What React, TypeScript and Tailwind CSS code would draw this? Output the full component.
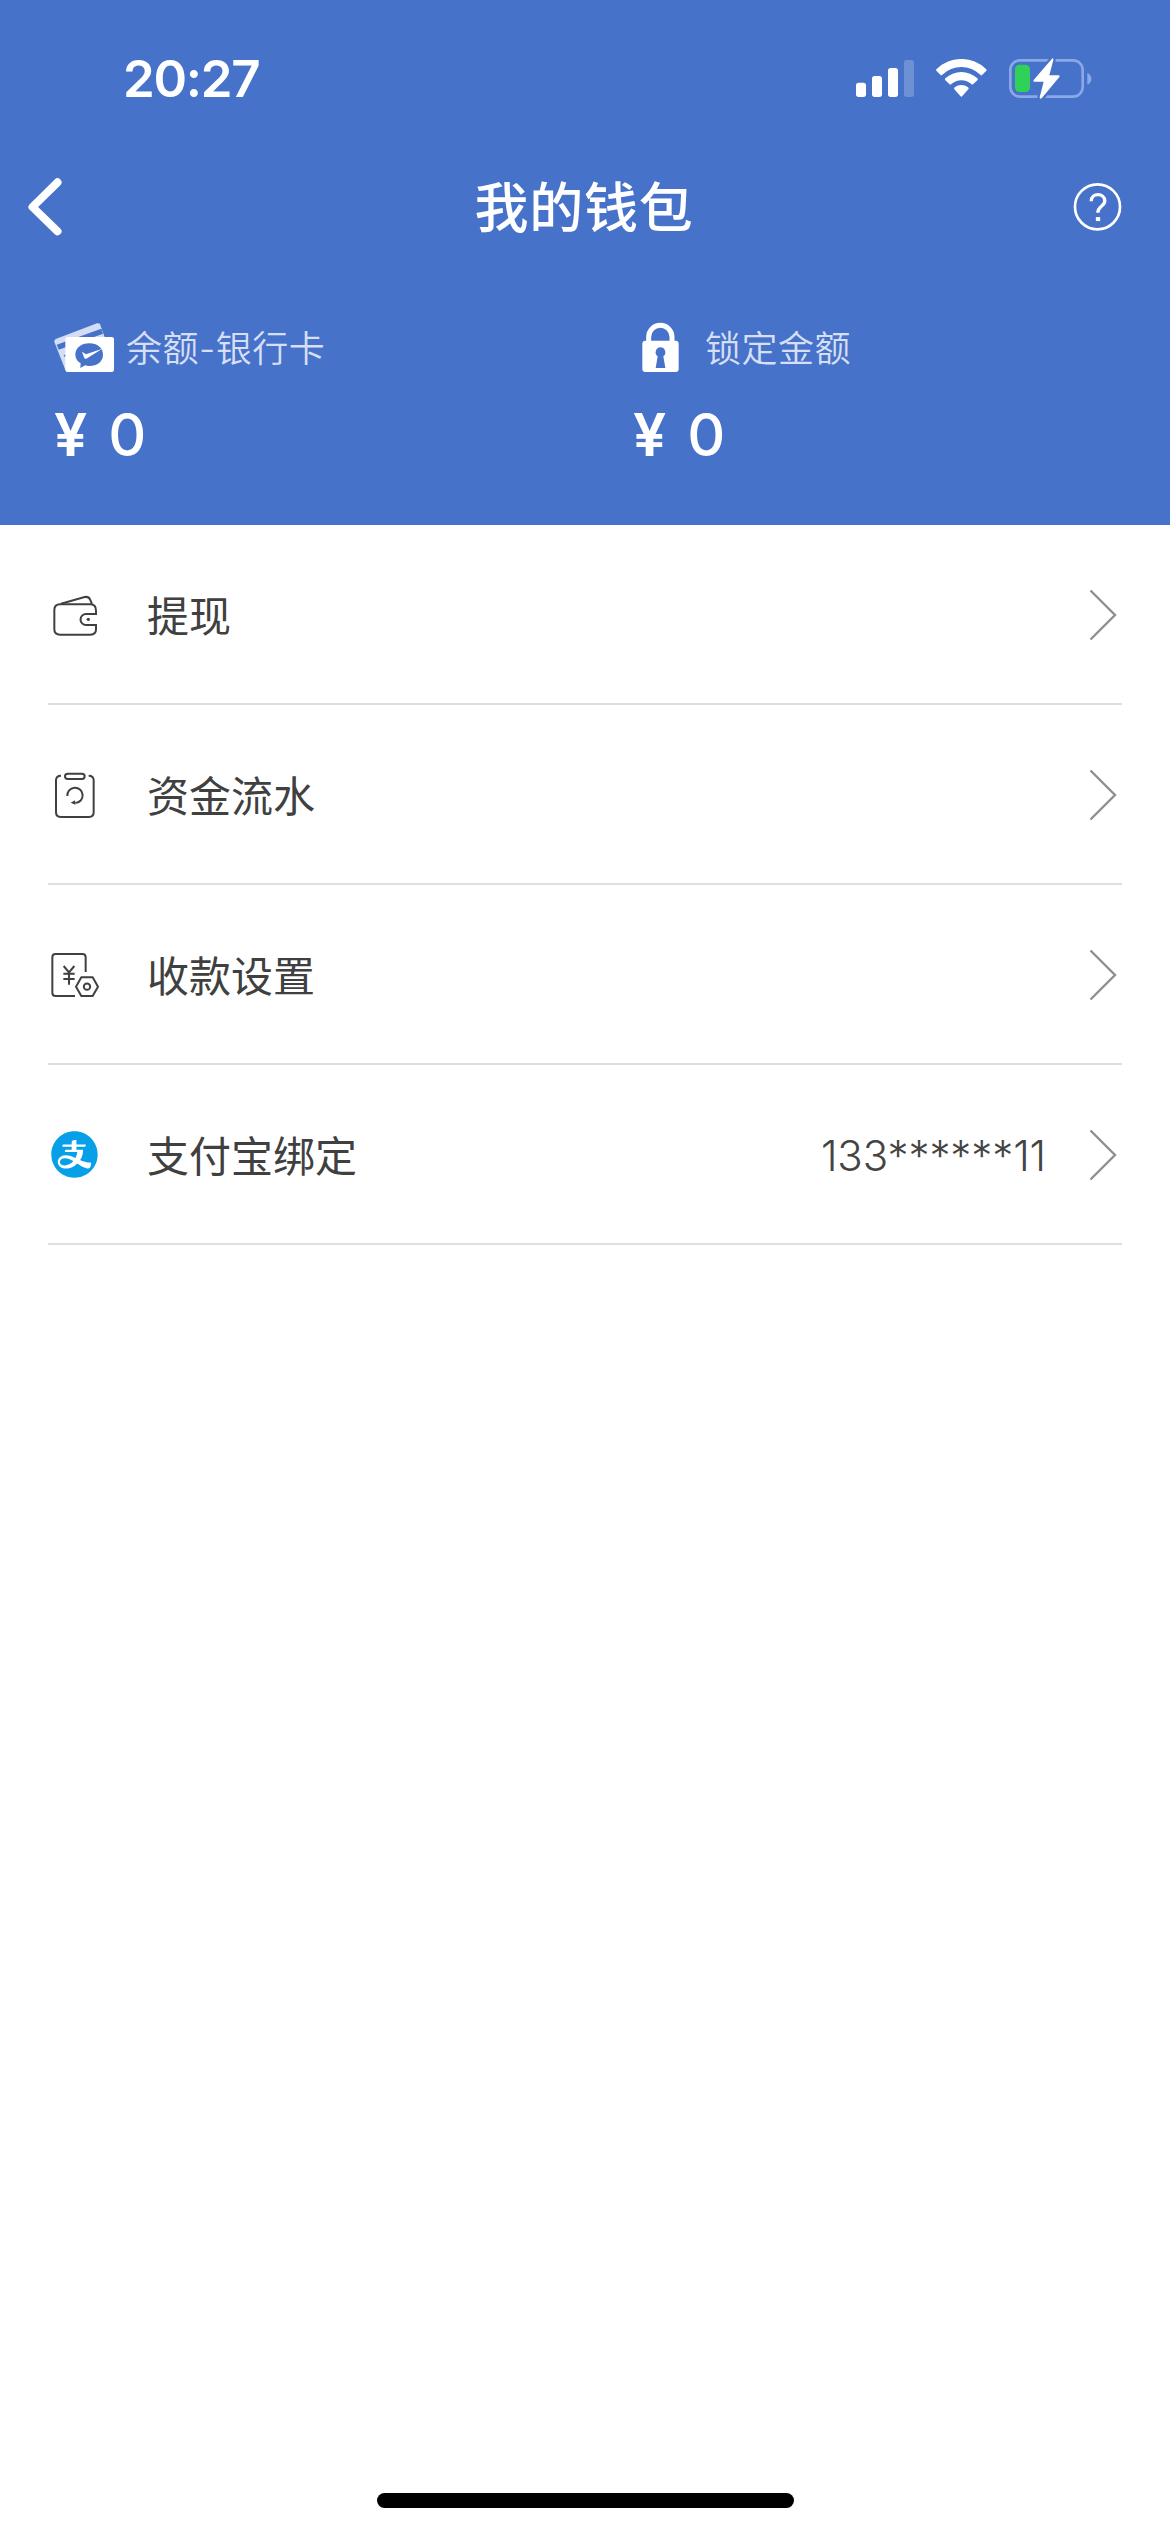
import type { ReactNode } from "react";
import { AiFillAlipayCircle } from "react-icons/ai";

const SignalIcon = () => (
    <svg viewBox="105 84 180 117" className="w-[60px] h-[39px]" fill="#fff">
        <rect x="108" y="155" width="30" height="43" rx="8" />
        <rect x="156" y="135" width="30" height="63" rx="8" />
        <rect x="204" y="111" width="30" height="87" rx="8" />
        <rect x="252" y="87" width="30" height="111" rx="8" opacity="0.22" />
    </svg>
);

const WifiIcon = () => (
    <svg viewBox="345 84 156 117" className="w-[52px] h-[39px] ml-[20px]" fill="#fff">
        <path d="M349 119 Q347 117 350 114 A106 106 0 0 1 498 114 Q501 117 499 119 L487 131 Q484 134 481 131 A82 82 0 0 0 367 131 Q364 134 361 131 Z" />
        <path d="M376 148 Q373 145 376 142 A70 70 0 0 1 472 142 Q475 145 472 148 L460 159 Q457 162 454 159 A45 45 0 0 0 394 159 Q391 162 388 159 Z" />
        <path d="M403 175 Q401 172 404 169 A32 32 0 0 1 444 169 Q448 172 445 175 L427 195 Q424 199 421 195 Z" />
    </svg>
);

const BatteryIcon = () => (
    <svg viewBox="564 78 252 129" className="w-[84px] h-[43px] ml-[21px]">
        <rect x="571" y="88" width="217" height="109" rx="29" fill="none" stroke="#8ba8e6" strokeWidth="8" />
        <path d="M802 125 Q814 131 814 143 Q814 155 802 161 Z" fill="#8ba8e6" />
        <rect x="585" y="101" width="45" height="82" rx="14" fill="#2fd159" />
        <path d="M696 83 L641 147 Q638 152 643 152 H671 L659 199 Q659 206 665 202 L718 138 Q721 133 715 133 H688 L700 87 Q701 79 696 83 Z" fill="#fff" stroke="#4672c9" strokeWidth="14" paintOrder="stroke" />
    </svg>
);

const BackIcon = () => (
    <svg viewBox="80 440 110 180" className="w-[37px] h-[60px]" fill="none" stroke="#fff" strokeWidth="24" strokeLinecap="round" strokeLinejoin="round">
        <path d="M171 456 L96 530 L171 603" />
    </svg>
);

const HelpIcon = () => (
    <svg viewBox="760 456 148 148" className="w-[49px] h-[49px]" fill="none" stroke="#fff">
        <circle cx="834" cy="528" r="68" strokeWidth="8" />
        <path d="M815 511 C815 484 856 485 856 510 C856 526 835 525 835 546" strokeWidth="10" />
        <rect x="829" y="559" width="13" height="12" fill="#fff" stroke="none" />
    </svg>
);

const CardsIcon = () => (
    <svg viewBox="72 66 183 153" className="w-[61px] h-[51px]">
        <path d="M77 117 L201 70 Q207 68 210 73 L240 155 L115 211 Q108 214 105 207 L73 126 Q72 120 77 117 Z" fill="#d3ddf6" />
        <path d="M80 134 L214 86 L219 101 L86 149 Z" fill="#4672c9" />
        <path d="M102 168 L112 164" stroke="#4672c9" strokeWidth="5" />
        <rect x="106" y="111" width="146" height="105" rx="7" fill="#fff" />
        <path d="M178 130 C202 130 219 144 219 164 C219 184 202 198 178 198 Q170 198 165 196 L151 204 L152 190 C142 184 136 175 136 164 C136 144 154 130 178 130 Z" fill="#4672c9" />
        <path d="M156 155 L168 163 L217 146 L169 176 Q164 178 162 172 Z" fill="#fff" />
    </svg>
);

const LockIcon = () => (
    <svg viewBox="72 66 183 153" className="w-[61px] h-[51px]">
        <path d="M119 126 V111 A35 35 0 0 1 189 111 V126" fill="none" stroke="#fff" strokeWidth="15" />
        <rect x="100" y="122" width="109" height="94" rx="9" fill="#fff" />
        <path d="M154 142 A15 15 0 0 1 163 169 L169 204 H140 L146 169 A15 15 0 0 1 154 142 Z" fill="#4672c9" />
    </svg>
);

const WalletIcon = () => (
    <svg viewBox="60 60 150 150" className="w-[50px] h-[50px]" fill="none" stroke="#404040" strokeWidth="6">
        <path d="M198 132 V122 Q198 103 180 103 H90 Q73 103 73 120 V178 Q73 194 90 194 H181 Q198 194 198 178 V165 H168 A16.500 16.500 0 0 1 168 132 Z" />
        <path d="M93 101 L164 81 Q176 79 180 88 L186 102" />
        <circle cx="175" cy="148" r="5" fill="#404040" stroke="none" />
    </svg>
);

const FlowIcon = () => (
    <svg viewBox="60 60 150 150" className="w-[50px] h-[50px]" fill="none" stroke="#404040" strokeWidth="6">
        <path d="M93 77 Q78 77 78 91 V187 Q78 201 92 201 H177 Q191 201 191 187 V91 Q191 77 176 77" />
        <rect x="105" y="71" width="59" height="16" rx="8" />
        <path d="M112 138 A23 23 0 1 1 136 159" />
        <path d="M122 158 L135 151 L136 164 Z" fill="#404040" stroke="none" />
    </svg>
);

const SettingIcon = () => (
    <svg viewBox="60 60 150 150" className="w-[50px] h-[50px]" fill="none" stroke="#404040" strokeWidth="6">
        <path d="M167 126 V82 Q167 72 157 72 H77 Q67 72 67 82 V188 Q67 198 77 198 H135" />
        <path d="M101 108 L117 127 L133 108 M117 127 V164 M100 131 H134 M100 147 H134" />
        <path d="M154 142 H188 L204 170 L188 198 H154 L138 170 Z" strokeLinejoin="round" />
        <circle cx="171" cy="170" r="9.500" strokeWidth="6" />
    </svg>
);

const ArrowIcon = () => (
    <svg viewBox="0 0 28 52" className="w-[28px] h-[52px]" fill="none" stroke="#8f8f8f" strokeWidth="2.4">
        <path d="M1.500 1.500 L26 26 L1.500 50.500" />
    </svg>
);

const balances: { label: string; amount: number; icon: ReactNode }[] = [
    { label: "余额-银行卡", amount: 0, icon: <CardsIcon /> },
    { label: "锁定金额", amount: 0, icon: <LockIcon /> },
];

const menus: { title: string; icon: ReactNode; value?: string }[] = [
    { title: "提现", icon: <WalletIcon /> },
    { title: "资金流水", icon: <FlowIcon /> },
    { title: "收款设置", icon: <SettingIcon /> },
    { title: "支付宝绑定", icon: <AiFillAlipayCircle className="size-[53px] shrink-0 -mt-[2px] -ml-[2px] -mr-[1px] text-[#069fe8]" />, value: "133******11" },
];

export default function App() {
    return (
        <div className="w-[1170px] h-[2532px] flex flex-col bg-white font-['Inter','Noto_Sans_CJK_SC',sans-serif]">
            <header className="h-[525px] bg-[#4672c9] text-white">
                <div className="h-[156px] pl-[123px] pr-[78px] flex items-center">
                    <span className="flex-1 text-[51px] leading-none font-semibold tracking-[-1.3px]">20:27</span>
                    <SignalIcon />
                    <WifiIcon />
                    <BatteryIcon />
                </div>
                <div className="h-[102px] pl-[27px] pr-12 flex items-center justify-between">
                    <div className="w-[56px]"><BackIcon /></div>
                    <h1 className="pt-[3px] pl-[12px] text-[54px] leading-none font-medium tracking-[0.8px]">我的钱包</h1>
                    <div className="w-[49px]"><HelpIcon /></div>
                </div>
                <div className="pt-[63px] pl-[54px] flex">
                    {balances.map((item) => (
                        <div key={item.label} className="w-[579px] shrink-0">
                            <div className="h-[52px] flex items-center gap-[11px]">
                                {item.icon}
                                <span className="pt-[4px] text-[36px] leading-none font-[350] tracking-[0.5px] text-[#d6dff5]">{item.label}</span>
                            </div>
                            <div className="h-[122px] flex items-center gap-[21px] text-[59px] leading-none">
                                <span className="font-semibold">¥</span>
                                <span className="font-medium">{item.amount}</span>
                            </div>
                        </div>
                    ))}
                </div>
            </header>
            <main className="flex-1 px-12">
                {menus.map((item) => (
                    <div key={item.title} className="h-[180px] flex items-center border-b-2 border-[#dedede] pt-[2px] pl-[2px] pr-[5px]">
                        {item.icon}
                        <span className="flex-1 pt-[4px] ml-[47px] text-[42px] leading-none text-[#404040]">{item.title}</span>
                        {item.value && <span className="pt-[2px] mr-[43px] text-[42px] leading-none font-[350] tracking-[-0.1px] text-[#444]">{item.value}</span>}
                        <ArrowIcon />
                    </div>
                ))}
            </main>
            <footer className="flex justify-center pb-[24px]">
                <div className="w-[417px] h-[15px] rounded-full bg-black" />
            </footer>
        </div>
    );
}
